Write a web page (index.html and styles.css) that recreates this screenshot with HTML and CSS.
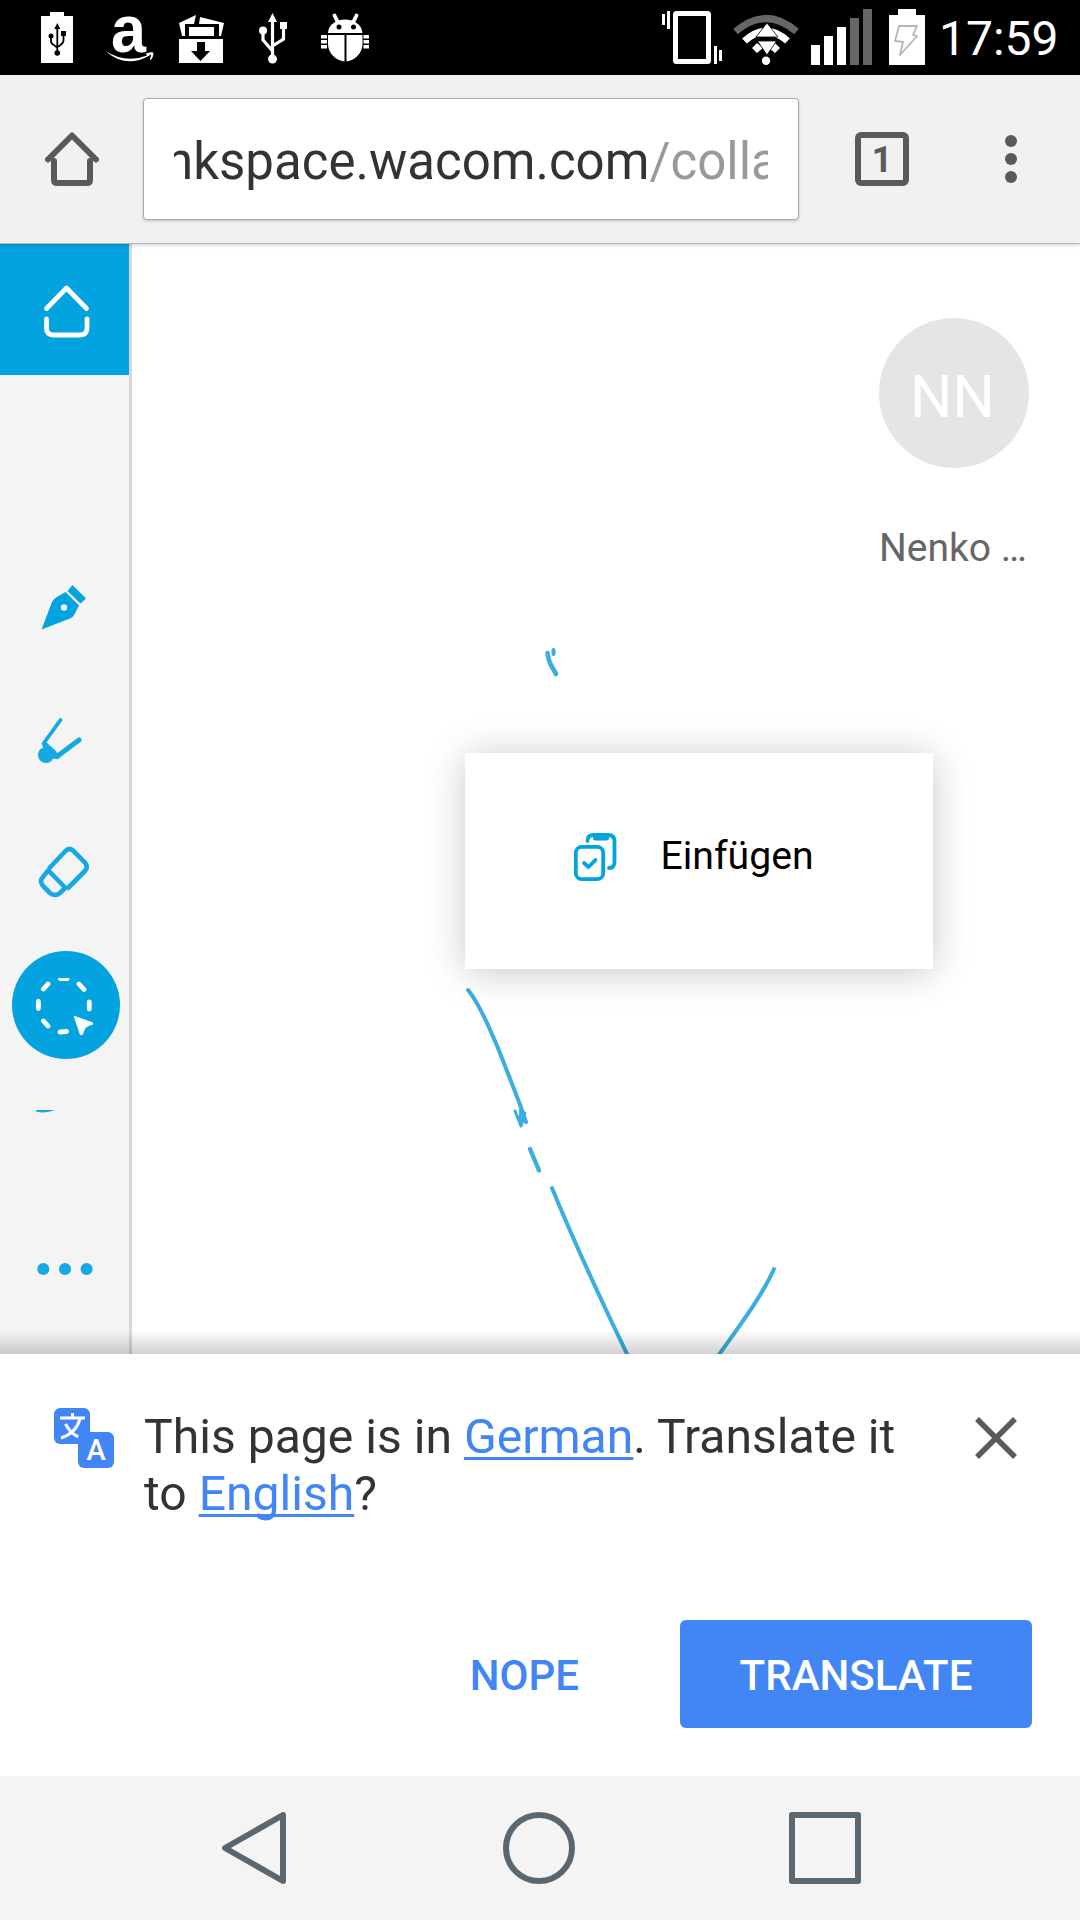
FILE: index.html
```html
<!DOCTYPE html>
<html lang="en">
<head>
<meta charset="utf-8">
<title>Inkspace collaboration</title>
<link rel="stylesheet" href="styles.css">
</head>
<body>
<div class="screen">
  <header class="status">
    <div class="status-left">
      <svg width="32" height="75" viewBox="41 0 32 75">
        <path fill="#fff" d="M50 12h14v4h9v47H41V16h9z"/>
        <path fill="none" stroke="#000" stroke-width="1.8" d="M57.300 27v24M51 36v5q0 3 3 4l3.500 3M63.500 33v7q0 3-3 5l-3 2"/>
        <path d="M57.300 23l3 6h-6zM61 31h5v5h-5z"/><circle cx="51" cy="36" r="2.500"/><circle cx="57.300" cy="53" r="2.800"/>
      </svg>
      <svg class="logo-a" width="48" height="75" viewBox="105 0 48 75">
        <text class="logo-letter" x="111" y="51.500" textLength="35" lengthAdjust="spacingAndGlyphs">a</text>
        <path fill="#fff" d="M105.500 51Q126 64 147 55.500l-1-1.500c-1-1 6-2.500 7-1.500s0 5.500-2.500 7.500c-1.500 0 1-4 .5-5.500l-2 1.200Q126 69 105.500 51z"/>
      </svg>
      <svg width="47" height="75" viewBox="178 0 47 75">
        <path fill="#fff" d="M179 39h44v24h-44zM179 23l17-8-2 9h-9v12h-3zM200 17l24 6-3 13h-2V24h-20zM189 27h25v9h-25z"/>
        <path d="M197 42h8v9h5l-9.500 10-9.500-10h6z"/>
      </svg>
      <svg width="28" height="75" viewBox="259 0 28 75">
        <path fill="none" stroke="#fff" stroke-width="3.200" d="M272.500 20v36M263 33v7l9.500 11M283.500 26v13l-11 7"/>
        <path fill="#fff" d="M272.500 13l4.500 9h-9zM280 22h7v7h-7z"/><circle cx="263" cy="30.500" r="4" fill="#fff"/><circle cx="272.500" cy="59" r="4.500" fill="#fff"/>
      </svg>
      <svg width="48" height="75" viewBox="321 0 48 75">
        <path fill="none" stroke="#fff" stroke-width="3.800" stroke-linecap="round" d="M334.500 15.500l4 8M356.500 15.500l-4 8"/>
        <path fill="#fff" d="M328 33c1-18 33-18 34.500 0zM328 35h16.500v26.500C335 60 328 53 328 44zM346.500 35h16v9c0 9-7 16-16 17.500zM321 35h6v3.500h-6zM321 40h6v3.500h-6zM321 45h6v3.500h-6zM363.500 35h6v3.500h-6zM363.500 40h6v3.500h-6zM363.500 45h6v3.500h-6z"/>
        <circle cx="339" cy="27" r="2.500"/><circle cx="353.500" cy="27" r="2.500"/>
      </svg>
    </div>
    <div class="status-right">
      <svg width="60" height="75" viewBox="662 0 60 75">
        <rect x="675.500" y="13.500" width="33" height="48" rx="1" fill="none" stroke="#fff" stroke-width="5"/>
        <path fill="#fff" d="M662 14h3v11h-3zM667 11h3v18h-3zM714 46h3v18h-3zM719 50h3v11h-3z"/>
      </svg>
      <svg width="66" height="75" viewBox="733 0 66 75">
        <path d="M735.500 31.500q30.500-26 61 0" fill="none" stroke="#666" stroke-width="7"/>
        <path d="M744.500 41q21.500-19.500 43 0" fill="none" stroke="#fff" stroke-width="7"/>
        <path fill="#fff" d="M752 48l5-5 6 5-6 5zM780 48l-5-5-6 5 6 5z"/>
        <path fill="#fff" stroke="#000" stroke-width=".8" d="M767 23l11 14h-22zM767 55l-9.500-14h19z"/>
        <circle cx="766" cy="60.700" r="4.200" fill="#fff"/>
      </svg>
      <svg width="61" height="75" viewBox="811 0 61 75">
        <path fill="#fff" d="M811 45h9v20h-9zM824 36h9v29h-9zM837 27h9v38h-9z"/><path fill="#666" d="M850 18h9v47h-9zM863 9h9v56h-9z"/>
      </svg>
      <svg width="36" height="75" viewBox="889 0 36 75">
        <path fill="#fff" d="M898 9h18v6h9v50h-36V15h9z"/><path fill="none" stroke="#b5b5b5" stroke-width="1.800" stroke-linejoin="round" d="M899 26h18l-4 9 4 1-17 19 3-13-8-1z"/>
      </svg>
      <span class="clock">17:59</span>
    </div>
  </header>

  <div class="toolbar">
    <svg class="tb-home" width="54" height="54" viewBox="45 132 54 54">
      <path d="M54 161v19q0 3 3 3h30q3 0 3-3v-19M48 159.500l24-24 24 24" fill="none" stroke="#5a5a5a" stroke-width="6" stroke-linecap="round" stroke-linejoin="round"/>
    </svg>
    <div class="omnibox"><div class="url"><span class="url-text"><span class="cut">n</span>kspace.wacom.com<span class="path">/colla</span></span></div></div>
    <div class="tabs">1</div>
    <svg class="more" width="14" height="54" viewBox="0 0 14 54"><g fill="#5a5a5a"><circle cx="7" cy="9" r="6"/><circle cx="7" cy="27" r="6"/><circle cx="7" cy="45" r="6"/></g></svg>
  </div>

  <main class="page">
    <nav class="side">
      <div class="cell home"><svg width="129" height="132" viewBox="0 243 129 132"><path d="M46.500 308.500L66.500 288l20 20.500M46.500 319v9q0 7 7 7h26.500q7 0 7-7v-9" fill="none" stroke="#fff" stroke-width="4.800" stroke-linecap="round" stroke-linejoin="round"/></svg></div>
      <svg width="129" height="132" viewBox="0 542 129 132"><path fill="#03a3e0" d="M41.500 629.500L52 602q1.500-3 4-4.500L65.500 592 79 605.500 74 615q-1 2-4 3.500zM67.500 591l5-6L86 598.500l-5.500 5z"/><circle cx="64" cy="607.500" r="3.200" fill="#f4f4f4"/></svg>
      <svg width="129" height="132" viewBox="0 674 129 132"><g fill="none" stroke="#14a9e2" stroke-linecap="round"><path stroke-width="3.800" d="M60.500 720L43.500 743.500"/><path stroke-width="5" d="M79 740L57 756.500"/></g><path fill="#14a9e2" d="M42 744l4-2 10 9 4 7-6 1-11-12z"/><circle cx="46" cy="755" r="8" fill="#14a9e2"/></svg>
      <svg width="129" height="132" viewBox="0 806 129 132"><path d="M48.500 869L65.500 851q4-4 8 0l11 11q4.500 5 0 9.500L67 889M48.500 870L43 877q-4 4 0 9l7 7q5 4 10 0l5-5M47 869l20 20.500" fill="none" stroke="#14a9e2" stroke-width="4.600"/></svg>
      <svg width="129" height="132" viewBox="0 938 129 132"><circle cx="66" cy="1005" r="54" fill="#03a3e0"/><g stroke="#fff" stroke-width="4.800" stroke-linecap="round"><path d="M79 984l5 5.500M89.300 1002v7M60 1032l6.500-.5M43.500 1021l4.500 5M38.400 1001.500v7M43.500 989l4.500-5"/></g><path d="M58 978h11.500q0 3-2 3h-7q-2.500 0-2.500-3z" fill="#fff"/><path fill="#fff" d="M73.500 1015.500L93 1022.500v2q-7 2-8 4.500l-2.500 6h-2.500z"/></svg>
      <svg width="129" height="132" viewBox="0 1070 129 132"><path fill="#14a9e2" d="M36 1110h19q-10 4-19 1.500z"/></svg>
      <svg width="129" height="132" viewBox="0 1202 129 132"><g fill="#14a9e2"><circle cx="43.300" cy="1269" r="6"/><circle cx="65" cy="1269" r="6"/><circle cx="86.600" cy="1269" r="6"/></g></svg>
    </nav>
    <section class="canvas">
      <svg class="ink" width="948" height="1111" viewBox="132 243 948 1111">
        <g fill="none" stroke="#3badde" stroke-width="4" stroke-linecap="round" stroke-linejoin="round">
          <path d="M468 990c12 14 29 54 39 81q7 18 12 31l7 20"/>
          <path stroke-width="3" d="M515 1111l6 15M521 1106l-1 16M525 1113l-4 13"/>
          <path stroke-width="4.400" d="M530 1149l9 21.500"/>
          <path d="M552 1188C570 1232 600 1298 628 1356"/>
          <path d="M774 1269C762 1296 740 1325 718 1356"/>
          <path stroke-width="4.600" d="M547.500 653q1 8 4 13l4.500 8"/><path d="M553.500 650v4"/>
        </g>
      </svg>
      <div class="user"><div class="avatar">NN</div><div class="name">Nenko …</div></div>
      <div class="popup">
        <svg width="44" height="50" viewBox="573 832 44 50">
          <g fill="none" stroke="#03a3e0" stroke-width="3.800" stroke-linecap="round" stroke-linejoin="round"><rect x="575.800" y="846.800" width="27.400" height="32.400" rx="6"/><path d="M587.500 841q0-6 6-6H608q6.500 0 6.500 6.500V862q0 6-5.500 6M584 863l4.500 4 7-7"/></g>
          <path fill="#03a3e0" d="M593 835h16v3q0 2.500-2.500 2.500h-11q-2.500 0-2.500-2.500z"/>
        </svg>
        <span class="popup-label">Einfügen</span>
      </div>
    </section>
  </main>

  <section class="infobar">
    <div class="message">
      <svg class="translate-icon" width="60" height="60" viewBox="54 1408 60 60">
        <rect x="54" y="1408" width="36" height="36" rx="6" fill="#4285f4"/>
        <path d="M60 1418h25M72.500 1413v5M65.500 1424q6 11 14 13M80 1419q-4 14-19 19" fill="none" stroke="#fff" stroke-width="3"/>
        <rect x="78" y="1432" width="36" height="36" rx="6" fill="#4285f4"/>
        <text class="icon-a" x="96" y="1460" text-anchor="middle">A</text>
      </svg>
      <p>This page is in <a>German</a>. Translate it to <a>English</a>?</p>
      <svg class="close" width="42" height="42" viewBox="0 0 42 42"><path d="M2 2l38 38M40 2L2 40" stroke="#5a5a5a" stroke-width="5.500"/></svg>
    </div>
    <div class="actions"><span class="nope">NOPE</span><span class="go">TRANSLATE</span></div>
  </section>

  <footer class="navbar">
    <svg width="64" height="72" viewBox="0 0 64 72"><path d="M61 3v66L3 36z"/></svg>
    <svg width="72" height="72" viewBox="0 0 72 72"><circle cx="36" cy="36" r="33"/></svg>
    <svg width="72" height="72" viewBox="0 0 72 72"><rect x="3" y="3" width="66" height="66"/></svg>
  </footer>
</div>
</body>
</html>
```
FILE: styles.css
```css
* { box-sizing: border-box; }
body { margin: 0; font-family: Roboto, "Noto Sans", sans-serif; }
svg { display: block; flex: none; }
.screen { width: 1080px; height: 1920px; display: flex; flex-direction: column; overflow: hidden; background: #fff; }

.status { height: 75px; flex: none; background: #000; display: flex; justify-content: space-between; padding: 0 22px 0 41px; }
.status-left { display: flex; column-gap: 33px; }
.status-left .logo-a { margin: 0 -8px 0 -1px; overflow: visible; }
.status-left svg:nth-child(4) { margin-left: 1px; }
.status-left svg:last-child { margin-left: 1px; }
.logo-letter { font: bold 67px "Liberation Sans", sans-serif; fill: #fff; }
.status-right { display: flex; align-items: center; width: 396px; margin-left: auto; }
.status-right svg:nth-child(2) { margin-left: 11px; }
.status-right svg:nth-child(3) { margin-left: 12px; }
.status-right svg:nth-child(4) { margin-left: 17px; }
.clock { margin-left: 14px; padding-top: 2px; font-size: 48px; line-height: 75px; color: #fff; }

.toolbar { height: 168px; flex: none; background: #f1f1f1; display: flex; padding: 23px 0 0 45px; position: relative; z-index: 2; box-shadow: 0 1px 0 #b4b4b4, 0 2px 4px rgba(0,0,0,.2); }
.tb-home { margin-top: 34px; }
.omnibox { width: 656px; height: 122px; margin-left: 44px; padding: 0 30px; background: #fff; border: 1px solid #acacac; border-radius: 4px; box-shadow: 0 1px 3px rgba(0,0,0,.22); }
.url { height: 120px; overflow: hidden; display: flex; }
.url-text { font-size: 51px; line-height: 126px; color: #333; white-space: nowrap; }
.cut { margin-left: -9px; }
.path { color: #999; }
.tabs { width: 54px; height: 54px; margin: 34px 0 0 56px; border: 6px solid #5a5a5a; border-radius: 6px; font-size: 36px; font-weight: 700; line-height: 44px; text-align: center; color: #5a5a5a; }
.more { margin: 34px 0 0 95px; }

.page { height: 1111px; flex: none; display: flex; }
.side { width: 132px; flex: none; background: #f4f4f4; border-right: 3px solid #d8d8d8; overflow: hidden; }
.home { background: #03a3e0; margin-bottom: 167px; }
.canvas { flex: 1; position: relative; display: flex; justify-content: flex-end; background: #fff; }
.ink { position: absolute; inset: 0; }
.user { width: 150px; margin: 75px 51px 0 0; }
.avatar { height: 150px; border-radius: 50%; background: #e5e5e5; color: #fff; font-size: 59.5px; line-height: 158px; text-align: center; text-indent: -3px; }
.name { margin-top: 57px; font-size: 39px; line-height: 46px; color: #666; white-space: nowrap; }
.popup { position: absolute; left: 333px; top: 510px; width: 468px; height: 216px; padding: 0 0 8px 108px; display: flex; align-items: center; column-gap: 43.5px; background: #fff; box-shadow: 0 3px 36px rgba(0,0,0,.22); font-size: 39.2px; color: #000; }
.popup-label { padding-bottom: 3px; }

.infobar { height: 422px; flex: none; position: relative; background: #fff; color: #333; }
.infobar::before { content: ""; position: absolute; left: 0; right: 0; bottom: 100%; height: 24px; background: linear-gradient(rgba(0,0,0,0), rgba(0,0,0,.18)); }
.message { display: flex; padding: 54px 0 0 54px; height: 266px; }
.message p { width: 770px; margin: 0 0 0 30px; font-size: 48.1px; line-height: 57px; }
.message a { color: #4285f4; text-decoration: underline; text-decoration-thickness: 3px; text-underline-offset: 4px; text-decoration-skip-ink: none; }
.icon-a { font: 500 29px Roboto, sans-serif; fill: #fff; }
.close { margin: 9px 0 0 61px; }
.actions { display: flex; justify-content: flex-end; padding-right: 48px; font-size: 42px; font-weight: 500; line-height: 112px; }
.nope { color: #4285f4; margin-right: 101px; }
.go { width: 352px; height: 108px; border-radius: 6px; background: #4285f4; color: #fff; text-align: center; }

.navbar { height: 144px; flex: none; background: #f4f4f4; display: flex; align-items: center; padding-left: 222px; }
.navbar svg { fill: none; stroke: #5a6770; stroke-width: 6; stroke-linejoin: round; }
.navbar svg:nth-child(2) { margin-left: 217px; }
.navbar svg:nth-child(3) { margin-left: 214px; }
```
